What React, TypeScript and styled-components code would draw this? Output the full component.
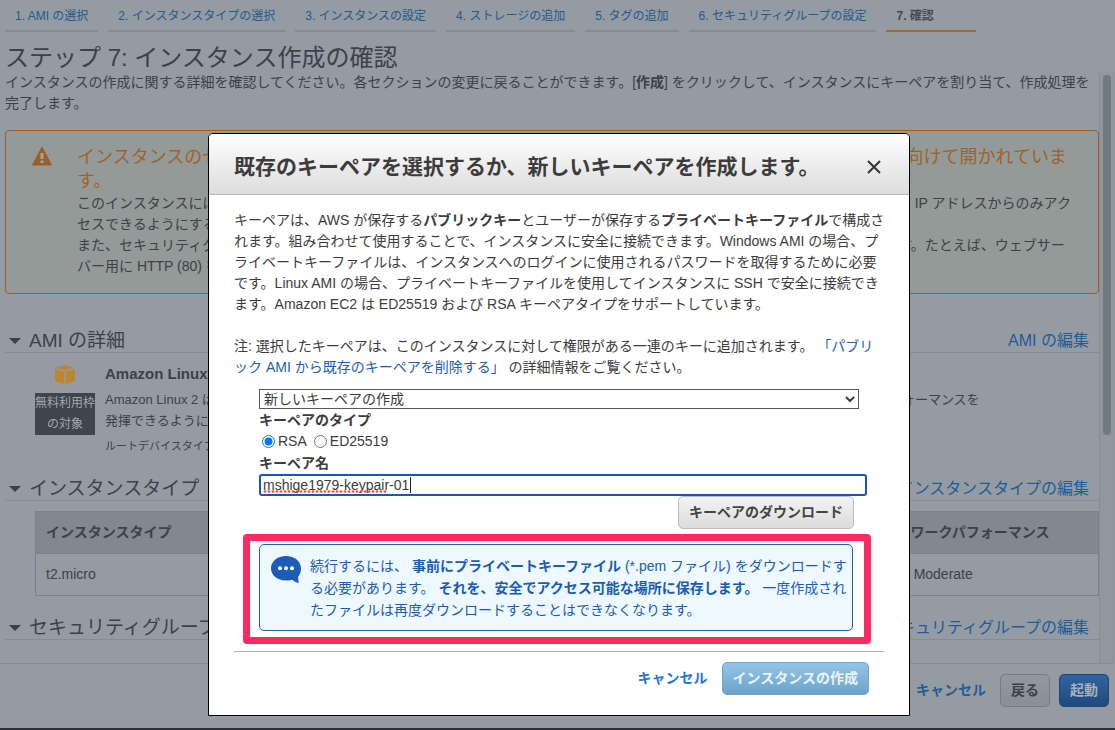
import React from "react";
import styled, { createGlobalStyle } from "styled-components";

const GlobalStyle = createGlobalStyle`
  * { box-sizing: border-box; }
  body {
    margin: 0;
    background: #949ba3;
    color: #3c414a;
    font-family: "Liberation Sans", "Noto Sans CJK JP", sans-serif;
    font-size: 14px;
    line-height: 21px;
    overflow: hidden;
  }
  a { text-decoration: none; }
  h1, h2, h3, p { margin: 0; font-weight: normal; }
  button, select, input { font-family: inherit; font-size: 14px; color: inherit; }
`;

const Page = styled.div`
  display: flex;
  flex-direction: column;
  height: 100vh;
  border-bottom: 2px solid #2b323c;
`;

const Steps = styled.nav`
  display: flex;
  gap: 10px;
  padding: 0 5px;
  flex: none;
  white-space: nowrap;
`;

const Step = styled.a<{ $active?: boolean }>`
  height: 32px;
  padding: 6px 10px 0;
  font-size: 12px;
  line-height: 21px;
  min-width: 90px;
  font-weight: ${(p) => (p.$active ? "bold" : "normal")};
  color: ${(p) => (p.$active ? "#454a52" : "#255a8b")};
  border-bottom: 2px solid ${(p) => (p.$active ? "#a5692a" : "#848b93")};
`;

const Title = styled.h1`
  flex: none;
  padding: 0 5px;
  margin-top: 12px;
  font-size: 24px;
  line-height: 28px;
`;

const Scroller = styled.div`
  display: flex;
  flex: 1;
  min-height: 0;
  margin-right: 1px;
  border-bottom: 1px solid #858c95;
`;

const Content = styled.main`
  flex: 1;
  min-width: 0;
  overflow: hidden;
  padding-left: 5px;
  white-space: nowrap;
`;

const Track = styled.div`
  flex: none;
  width: 15px;
  padding: 3px 3px 0;
  background: #90979f;
  border: solid #868d96;
  border-width: 0 1px;
`;

const Thumb = styled.div`
  height: 360px;
  width: 8px;
  border-radius: 4px;
  background: #717982;
`;

const Warning = styled.section`
  display: flex;
  margin-top: 16px;
  padding: 14px 25px 16px;
  border: 1px solid #99612a;
  border-radius: 4px;
  background: #939a97;
`;

const WarningIcon = styled.svg`
  flex: none;
  width: 22px;
  height: 22px;
  margin-right: 24px;
`;

const WarningTitle = styled.h2`
  font-size: 18px;
  line-height: 24px;
  color: #a0622a;
`;

const Section = styled.section<{ $gap: number }>`
  margin-top: ${(p) => p.$gap}px;
`;

const SectionBar = styled.header`
  display: flex;
  align-items: center;
  height: 24px;
  padding: 0 10px 0 4px;
  border-bottom: 1px solid #858c95;
`;

const Toggle = styled.button`
  display: flex;
  align-items: center;
  gap: 8px;
  padding: 0;
  border: 0;
  background: none;
  font-size: 19px;
  line-height: 24px;
  &::before {
    content: "";
    border: solid transparent;
    border-width: 6px 6px 0;
    border-top-color: #3a4048;
  }
`;

const EditLink = styled.a`
  margin-left: auto;
  font-size: 16px;
  color: #245b95;
`;

const AmiRow = styled.div`
  display: flex;
  gap: 10px;
  padding: 10px 0 0 30px;
`;

const AmiSide = styled.div`
  display: flex;
  flex-direction: column;
  align-items: center;
  width: 60px;
  flex: none;
  gap: 8px;
  padding-top: 2px;
`;

const FreeTier = styled.div`
  width: 60px;
  background: #3f444d;
  color: #a3a9b0;
  font-size: 12px;
  text-align: center;
`;

const AmiName = styled.h3`
  font-size: 15px;
  font-weight: bold;
  margin-bottom: 5px;
`;

const AmiText = styled.p`
  font-size: 13px;
`;

const AmiMeta = styled.p`
  margin-top: 5px;
  font-size: 11px;
`;

const Table = styled.table`
  width: calc(100% - 30px);
  margin: 10px 0 0 30px;
  border-collapse: collapse;
  border: 1px solid #7b828a;
  th, td {
    height: 42px;
    padding: 0 10px;
    text-align: left;
    border-bottom: 1px solid #7b828a;
  }
  th { background: #82888f; }
  th:last-child { width: 240px; }
`;

const Footer = styled.footer`
  display: flex;
  flex: none;
  justify-content: flex-end;
  align-items: flex-start;
  height: 64px;
  padding: 10px 6px 0;
`;

const Button = styled.button<{ $kind: "plain" | "dimPlain" | "dimPrimary" | "pale" }>`
  height: 33px;
  padding: 0 10px 3px;
  border-radius: 5px;
  font-weight: bold;
  white-space: nowrap;
  ${(p) =>
    ({
      plain: "background: linear-gradient(#f3f3f3, #dcdcdc); border: 1px solid #bcbcbc; color: #444;",
      dimPlain: "background: linear-gradient(#9198a0, #888f97); border: 1px solid #757c85;",
      dimPrimary: "background: linear-gradient(#2f649f, #20497e); border: 1px solid #1e4679; color: #aab1b8;",
      pale: "background: linear-gradient(#92c5e9, #6da3c9); border: 1px solid #6fa5cb; color: #e9f3fa;",
    })[p.$kind]}
`;

const CancelLink = styled.a<{ $dim?: boolean }>`
  font-weight: bold;
  line-height: 33px;
  margin-right: 14px;
  color: ${(p) => (p.$dim ? "#255b97" : "#2475d1")};
`;

const Gap = styled.span`
  width: 9px;
`;

const Overlay = styled.div`
  position: fixed;
  inset: 0;
  display: flex;
  justify-content: center;
  align-items: flex-start;
  padding: 133px 0 0 3px;
`;

const Dialog = styled.section`
  width: 702px;
  border: 1px solid #000;
  border-radius: 5px 5px 0 0;
  background: #fff;
  color: #3c3c3c;
  overflow: hidden;
`;

const DialogHeader = styled.header`
  display: flex;
  align-items: center;
  justify-content: space-between;
  height: 61px;
  padding: 5px 27px 0 25px;
  border-bottom: 1px solid #bcbcbc;
  background: linear-gradient(#fff, #dcdcdc);
`;

const DialogTitle = styled.h2`
  font-size: 21px;
  line-height: 30px;
  font-weight: bold;
`;

const Close = styled.button`
  display: flex;
  padding: 0;
  border: 0;
  background: none;
`;

const DialogBody = styled.div`
  padding: 15px 25px 20px;
  white-space: nowrap;
`;

const Note = styled.p`
  margin-top: 21px;
  a { color: #1c60b5; }
`;

const Form = styled.form`
  display: flex;
  flex-direction: column;
  margin: 11px 17px 0 25px;
`;

const Select = styled.select`
  width: calc(100% - 8px);
  height: 20px;
  padding: 0;
  border: 1px solid #5a5a5a;
  border-radius: 0;
  background-color: #fff;
`;

const Label = styled.label`
  font-weight: bold;
  line-height: 22px;
`;

const RadioRow = styled.div`
  display: flex;
  align-items: center;
  height: 21px;
  label { display: flex; align-items: center; margin-right: 4px; }
  input { width: 13px; height: 13px; margin: 0 3px; }
`;

const NameField = styled.div`
  position: relative;
  display: flex;
`;

const NameInput = styled.input`
  width: 100%;
  height: 22px;
  padding: 0 2px;
  border: 2px solid #1857b8;
  border-radius: 3px;
  outline: 0;
`;

const SpellMark = styled.span`
  position: absolute;
  left: 4px;
  bottom: 3px;
  width: 124px;
  height: 3px;
  background: radial-gradient(circle, #f4463f 1px, #f4463fa0 1px, transparent 2px) 0 0 / 4px 3px;
`;

const Caret = styled.span`
  position: absolute;
  left: 151px;
  top: 3px;
  width: 1px;
  height: 16px;
  background: #222;
`;

const DownloadRow = styled.div`
  display: flex;
  justify-content: flex-end;
  padding-right: 13px;
`;

const Highlight = styled.div`
  margin: 5px -4px 0 -16px;
  padding: 3px 11px 6px 9px;
  border: 7px solid #fd2a63;
  border-radius: 4px;
`;

const Info = styled.div`
  display: flex;
  height: 87px;
  padding: 10px 0 0 11px;
  border: 1px solid #1d60b4;
  border-radius: 5px;
  background: #edf8ff;
  color: #1c5cb0;
  svg { flex: none; margin: 1px 9px 0 0; }
  p { line-height: 22px; }
`;

const Actions = styled.footer`
  display: flex;
  justify-content: flex-end;
  margin-top: 7px;
  padding: 10px 15px 0 0;
  border-top: 1px solid #b0b0b0;
`;

const steps = [
  "1. AMI の選択",
  "2. インスタンスタイプの選択",
  "3. インスタンスの設定",
  "4. ストレージの追加",
  "5. タグの追加",
  "6. セキュリティグループの設定",
  "7. 確認",
];

function SectionHeader({ title, edit }: { title: string; edit: string }) {
  return (
    <SectionBar>
      <Toggle>{title}</Toggle>
      <EditLink href="#">{edit}</EditLink>
    </SectionBar>
  );
}

function KeyPairDialog() {
  return (
    <Overlay>
      <Dialog role="dialog" aria-modal="true" aria-labelledby="dialog-title">
        <DialogHeader>
          <DialogTitle id="dialog-title">既存のキーペアを選択するか、新しいキーペアを作成します。</DialogTitle>
          <Close aria-label="閉じる">
            <svg width="16" height="16" viewBox="0 0 16 16" fill="none" stroke="#333" strokeWidth="2">
              <path d="M2 2 14 14M14 2 2 14" />
            </svg>
          </Close>
        </DialogHeader>
        <DialogBody>
          <p>
            キーペアは、AWS が保存する<b>パブリックキー</b>とユーザーが保存する<b>プライベートキーファイル</b>で構成さ<br />
            れます。組み合わせて使用することで、インスタンスに安全に接続できます。Windows AMI の場合、プ<br />
            ライベートキーファイルは、インスタンスへのログインに使用されるパスワードを取得するために必要<br />
            です。Linux AMI の場合、プライベートキーファイルを使用してインスタンスに SSH で安全に接続でき<br />
            ます。Amazon EC2 は ED25519 および RSA キーペアタイプをサポートしています。
          </p>
          <Note>
            注: 選択したキーペアは、このインスタンスに対して権限がある一連のキーに追加されます。{" "}
            <a href="#">「パブリ<br />ック AMI から既存のキーペアを削除する」</a> の詳細情報をご覧ください。
          </Note>
          <Form onSubmit={(e) => e.preventDefault()}>
            <Select aria-label="キーペアの選択" defaultValue="new">
              <option value="new">新しいキーペアの作成</option>
            </Select>
            <Label as="span" id="type-label">キーペアのタイプ</Label>
            <RadioRow role="radiogroup" aria-labelledby="type-label">
              <label><input type="radio" name="type" defaultChecked />RSA</label>
              <label><input type="radio" name="type" />ED25519</label>
            </RadioRow>
            <Label htmlFor="key-name">キーペア名</Label>
            <NameField>
              <NameInput id="key-name" type="text" spellCheck={false} defaultValue="mshige1979-keypair-01" />
              <SpellMark />
              <Caret />
            </NameField>
            <DownloadRow>
              <Button type="button" $kind="plain">キーペアのダウンロード</Button>
            </DownloadRow>
            <Highlight>
              <Info>
                <svg width="30" height="28" viewBox="0 0 30 28">
                  <path d="M15 0C6.500 0 0 5.500 0 12.300S6.500 24.600 15 24.600c2.200 0 4.300-.3 6.100-.9 1.800 1.500 4.200 2.600 6.700 3.300-.4-1.900-.7-4.200-.6-6.200C29 18.600 30 15.600 30 12.300 30 5.500 23.500 0 15 0Z" fill="#1c5cb5" />
                  <g fill="#fff">
                    <circle cx="9" cy="12.300" r="2" />
                    <circle cx="15" cy="12.300" r="2" />
                    <circle cx="21" cy="12.300" r="2" />
                  </g>
                </svg>
                <p>
                  続行するには、 <b>事前にプライベートキーファイル</b> (*.pem ファイル) をダウンロードす<br />
                  る必要があります。 <b>それを、安全でアクセス可能な場所に保存します。</b> 一度作成され<br />
                  たファイルは再度ダウンロードすることはできなくなります。
                </p>
              </Info>
            </Highlight>
          </Form>
          <Actions>
            <CancelLink href="#">キャンセル</CancelLink>
            <Button type="button" $kind="pale">インスタンスの作成</Button>
          </Actions>
        </DialogBody>
      </Dialog>
    </Overlay>
  );
}

export default function App() {
  return (
    <>
      <GlobalStyle />
      <Page>
        <Steps>
          {steps.map((s, i) => (
            <Step key={s} href="#" $active={i === 6}>{s}</Step>
          ))}
        </Steps>
        <Title>ステップ 7: インスタンス作成の確認</Title>
        <Scroller>
          <Content>
            <p>
              インスタンスの作成に関する詳細を確認してください。各セクションの変更に戻ることができます。[<b>作成</b>] をクリックして、インスタンスにキーペアを割り当て、作成処理を<br />
              完了します。
            </p>
            <Warning>
              <WarningIcon viewBox="0 0 22 22">
                <path d="M11 2 L20.500 20 H1.500 Z" fill="#9a5f2a" stroke="#9a5f2a" strokeWidth="1" strokeLinejoin="round" />
                <path d="M9.500 8h3v6h-3zM9.500 15.500h3v2.500h-3z" fill="#a3a49c" />
              </WarningIcon>
              <div>
                <WarningTitle>
                  インスタンスのセキュリティを強化してください。セキュリティグループ、launch-wizard-2 は世界中に向けて開かれていま<br />
                  す。
                </WarningTitle>
                <p>
                  このインスタンスには、どのアドレスからでもアクセスできる可能性があります。セキュリティグループのルールを更新して、既知の IP アドレスからのみアク<br />
                  セスできるようにすることをお勧めします。<br />
                  また、セキュリティグループの追加ポートを開いて、インスタンスで実行されているアプリケーションへのアクセスを容易にできます。たとえば、ウェブサー<br />
                  バー用に HTTP (80) を開きます。
                </p>
              </div>
            </Warning>
            <Section $gap={35}>
              <SectionHeader title="AMI の詳細" edit="AMI の編集" />
              <AmiRow>
                <AmiSide>
                  <svg width="20" height="20" viewBox="0 0 20 20" fill="#bc852f">
                    <path d="M10 0 19 2.800 10 5.500 1 2.800ZM0 4 9.300 6.800V19L0 16ZM20 4 10.700 6.800V19L20 16Z" />
                  </svg>
                  <FreeTier>無料利用枠<br />の対象</FreeTier>
                </AmiSide>
                <div>
                  <AmiName>Amazon Linux 2 AMI (HVM)</AmiName>
                  <AmiText>
                    Amazon Linux 2 は、5 年間のサポートが付いた汎用の Linux 環境です。安全かつ安定した実行環境を提供し、Amazon EC2 で最適なパフォーマンスを<br />
                    発揮できるように調整されています。
                  </AmiText>
                  <AmiMeta>ルートデバイスタイプ: ebs</AmiMeta>
                </div>
              </AmiRow>
            </Section>
            <Section $gap={20}>
              <SectionHeader title="インスタンスタイプ" edit="インスタンスタイプの編集" />
              <Table>
                <thead>
                  <tr><th>インスタンスタイプ</th><th>ECU</th><th>vCPU</th><th>ネットワークパフォーマンス</th></tr>
                </thead>
                <tbody>
                  <tr><td>t2.micro</td><td>-</td><td>1</td><td>Low to Moderate</td></tr>
                </tbody>
              </Table>
            </Section>
            <Section $gap={20}>
              <SectionHeader title="セキュリティグループ" edit="セキュリティグループの編集" />
            </Section>
          </Content>
          <Track><Thumb /></Track>
        </Scroller>
        <Footer>
          <CancelLink href="#" $dim>キャンセル</CancelLink>
          <Button $kind="dimPlain">戻る</Button>
          <Gap />
          <Button $kind="dimPrimary">起動</Button>
        </Footer>
      </Page>
      <KeyPairDialog />
    </>
  );
}
